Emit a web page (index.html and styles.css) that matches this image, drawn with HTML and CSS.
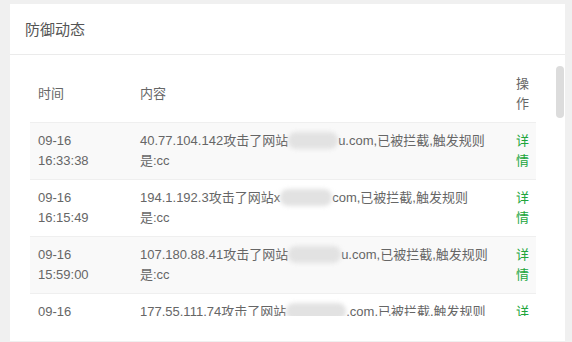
FILE: index.html
```html
<!DOCTYPE html>
<html lang="zh-CN">
<head>
    <meta charset="UTF-8">
    <meta name="viewport" content="width=device-width, initial-scale=1.0">
    <title>防御动态</title>
    <link rel="stylesheet" href="styles.css">
</head>
<body>
    <div class="card">
        <div class="card-title">防御动态</div>

        <div class="log-wrap">
            <div class="log-box">
                <table class="log-table">
                    <colgroup>
                        <col class="col-time">
                        <col>
                        <col class="col-op">
                    </colgroup>
                    <thead>
                        <tr>
                            <th>时间</th>
                            <th>内容</th>
                            <th>操作</th>
                        </tr>
                    </thead>
                    <tbody>
                        <tr>
                            <td>09-16<br>16:33:38</td>
                            <td>40.77.104.142攻击了网站<span class="mask w50"></span>u.com,已被拦截,触发规则是:cc</td>
                            <td><a href="#" class="link">详情</a></td>
                        </tr>
                        <tr>
                            <td>09-16<br>16:15:49</td>
                            <td>194.1.192.3攻击了网站x<span class="mask w52"></span>com,已被拦截,触发规则是:cc</td>
                            <td><a href="#" class="link">详情</a></td>
                        </tr>
                        <tr>
                            <td>09-16<br>15:59:00</td>
                            <td>107.180.88.41攻击了网站<span class="mask w53"></span>u.com,已被拦截,触发规则是:cc</td>
                            <td><a href="#" class="link">详情</a></td>
                        </tr>
                        <tr>
                            <td>09-16<br>15:41:27</td>
                            <td>177.55.111.74攻击了网站<span class="mask w60"></span>.com,已被拦截,触发规则是:cc</td>
                            <td><a href="#" class="link">详情</a></td>
                        </tr>
                        <tr>
                            <td>09-16<br>15:20:13</td>
                            <td>66.249.71.18攻击了网站<span class="mask w53"></span>u.com,已被拦截,触发规则是:cc</td>
                            <td><a href="#" class="link">详情</a></td>
                        </tr>
                        <tr>
                            <td>09-16<br>14:58:06</td>
                            <td>112.74.52.9攻击了网站<span class="mask w53"></span>u.com,已被拦截,触发规则是:cc</td>
                            <td><a href="#" class="link">详情</a></td>
                        </tr>
                        <tr>
                            <td>09-16<br>14:32:51</td>
                            <td>40.77.167.63攻击了网站<span class="mask w53"></span>u.com,已被拦截,触发规则是:cc</td>
                            <td><a href="#" class="link">详情</a></td>
                        </tr>
                        <tr>
                            <td>09-16<br>14:10:44</td>
                            <td>185.191.171.5攻击了网站<span class="mask w53"></span>u.com,已被拦截,触发规则是:cc</td>
                            <td><a href="#" class="link">详情</a></td>
                        </tr>
                        <tr>
                            <td>09-16<br>13:47:22</td>
                            <td>207.46.13.120攻击了网站<span class="mask w53"></span>u.com,已被拦截,触发规则是:cc</td>
                            <td><a href="#" class="link">详情</a></td>
                        </tr>
                        <tr>
                            <td>09-16<br>13:25:09</td>
                            <td>114.119.150.7攻击了网站<span class="mask w53"></span>u.com,已被拦截,触发规则是:cc</td>
                            <td><a href="#" class="link">详情</a></td>
                        </tr>
                        <tr>
                            <td>09-16<br>12:59:37</td>
                            <td>157.55.39.84攻击了网站<span class="mask w53"></span>u.com,已被拦截,触发规则是:cc</td>
                            <td><a href="#" class="link">详情</a></td>
                        </tr>
                        <tr>
                            <td>09-16<br>12:31:15</td>
                            <td>220.181.108.9攻击了网站<span class="mask w53"></span>u.com,已被拦截,触发规则是:cc</td>
                            <td><a href="#" class="link">详情</a></td>
                        </tr>
                        <tr>
                            <td>09-16<br>12:04:58</td>
                            <td>54.36.148.22攻击了网站<span class="mask w53"></span>u.com,已被拦截,触发规则是:cc</td>
                            <td><a href="#" class="link">详情</a></td>
                        </tr>
                        <tr>
                            <td>09-16<br>11:40:03</td>
                            <td>47.92.118.6攻击了网站<span class="mask w53"></span>u.com,已被拦截,触发规则是:cc</td>
                            <td><a href="#" class="link">详情</a></td>
                        </tr>
                        <tr>
                            <td>09-16<br>11:12:46</td>
                            <td>93.158.161.7攻击了网站<span class="mask w53"></span>u.com,已被拦截,触发规则是:cc</td>
                            <td><a href="#" class="link">详情</a></td>
                        </tr>
                        <tr>
                            <td>09-16<br>10:48:30</td>
                            <td>123.125.71.2攻击了网站<span class="mask w53"></span>u.com,已被拦截,触发规则是:cc</td>
                            <td><a href="#" class="link">详情</a></td>
                        </tr>
                        <tr>
                            <td>09-16<br>10:21:17</td>
                            <td>36.99.136.14攻击了网站<span class="mask w53"></span>u.com,已被拦截,触发规则是:cc</td>
                            <td><a href="#" class="link">详情</a></td>
                        </tr>
                        <tr>
                            <td>09-16<br>09:55:02</td>
                            <td>40.77.188.9攻击了网站<span class="mask w53"></span>u.com,已被拦截,触发规则是:cc</td>
                            <td><a href="#" class="link">详情</a></td>
                        </tr>
                        <tr>
                            <td>09-16<br>09:30:41</td>
                            <td>182.61.2.16攻击了网站<span class="mask w53"></span>u.com,已被拦截,触发规则是:cc</td>
                            <td><a href="#" class="link">详情</a></td>
                        </tr>
                    </tbody>
                </table>
            </div>
            <!-- 滚动条滑块（浏览器隐藏了原生滚动条） -->
            <div class="scroll-thumb"></div>
        </div>
    </div>
</body>
</html>
```

FILE: styles.css
```css
* {
    margin: 0;
    padding: 0;
    box-sizing: border-box;
}

body {
    font-family: "Liberation Sans", "Noto Sans CJK SC", sans-serif;
    font-size: 13px;
    background: #f0f0f0;
    color: #666;
    padding: 4px 7px 0 10px;
}

.card {
    background: #fff;
    padding-bottom: 25px;
}

.card-title {
    height: 51px;
    line-height: 51px;
    padding-left: 15px;
    font-size: 15px;
    color: #555;
    border-bottom: 1px solid #ebebeb;
}

.log-wrap {
    position: relative;
    margin-top: 11px;
}

.log-box {
    height: 250px;
    padding: 0 29px 0 20px;
    overflow-y: scroll;
    scrollbar-width: none;
}

.log-box::-webkit-scrollbar {
    display: none;
}

.scroll-thumb {
    position: absolute;
    top: 0;
    right: 1px;
    width: 8px;
    height: 52px;
    background: #dcdcdc;
    border-radius: 4px;
}

.log-table {
    width: 100%;
    border-collapse: collapse;
    table-layout: fixed;
}

.col-time { width: 102px; }
.col-op { width: 28px; }

.log-table th,
.log-table td {
    padding: 8px 17px 8px 8px;
    line-height: 20px;
    text-align: left;
    font-weight: normal;
    vertical-align: top;
    border-bottom: 1px solid #efefef;
}

.log-table th {
    vertical-align: middle;
    color: #666;
}

.log-table th:last-child,
.log-table td:last-child {
    padding-right: 8px;
}

.log-table tbody tr:nth-child(odd) {
    background: #f9f9f9;
}

.mask {
    display: inline-block;
    height: 17px;
    vertical-align: -4px;
    background: #e2e2e2;
    border-radius: 8px;
    filter: blur(2px);
}

.w50 { width: 50px; }
.w52 { width: 52px; }
.w53 { width: 53px; }
.w60 { width: 60px; }

.link {
    color: #20a53a;
    text-decoration: none;
}
```
